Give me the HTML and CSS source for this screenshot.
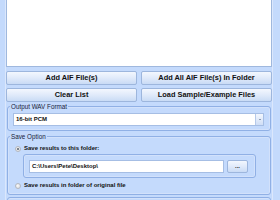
FILE: index.html
```html
<!DOCTYPE html>
<html>
<head>
<meta charset="utf-8">
<link rel="stylesheet" href="styles.css">
</head>
<body>
<div class="win">
  <div class="panel">
    <div class="list"></div>
    <div class="btnrow">
      <button class="btn">Add AIF File(s)</button>
      <button class="btn">Add All AIF File(s) In Folder</button>
      <button class="btn">Clear List</button>
      <button class="btn">Load Sample/Example Files</button>
    </div>
    <div class="group g1">
      <div class="legend">Output WAV Format</div>
      <div class="select">
        <span class="sel-text">16-bit PCM</span>
        <span class="sel-btn"><span class="arrow"></span></span>
      </div>
    </div>
    <div class="group g2">
      <div class="legend">Save Option</div>
      <div class="radio-row first">
        <span class="radio checked"></span>
        <span class="rlabel">Save results to this folder:</span>
      </div>
      <div class="inner">
        <div class="input">C:\Users\Pete\Desktop\</div>
        <button class="dots">...</button>
      </div>
      <div class="radio-row second">
        <span class="radio"></span>
        <span class="rlabel">Save results in folder of original file</span>
      </div>
    </div>
    <div class="group g3"></div>
  </div>
</div>
</body>
</html>
```

FILE: styles.css
```css
html, body {
  margin: 0;
  padding: 0;
}
body {
  background: #c4dafc;
  font-family: "Liberation Sans", Arial, sans-serif;
  color: #111;
}
.win {
  width: 280px;
  height: 200px;
  overflow: hidden;
  background: #c4dafc;
  padding-left: 5px;
  box-sizing: border-box;
  display: flex;
}
.panel {
  width: 268px;
  box-sizing: border-box;
  border-left: 1px solid #dbe7fc;
  border-right: 1px solid #dbe7fc;
  display: flex;
  flex-direction: column;
}
.list {
  margin-top: -2px;
  height: 69px;
  flex: none;
  box-sizing: border-box;
  background: #fff;
  border: 1px solid #9fb8de;
}
.btnrow {
  margin-top: 4px;
  display: grid;
  grid-template-columns: 1fr 1fr;
  grid-auto-rows: 14px;
  column-gap: 4px;
  row-gap: 3px;
}
.btn {
  margin: 0;
  padding: 0;
  box-sizing: border-box;
  height: 14px;
  border: 1px solid #9db6dd;
  border-radius: 2px;
  background: linear-gradient(#f3f7fe, #e0eafa 50%, #c9dbf5);
  font-family: "Liberation Sans", Arial, sans-serif;
  font-weight: bold;
  font-size: 7.4px;
  line-height: 12px;
  color: #111;
  text-align: center;
  white-space: nowrap;
}
.group {
  margin: 0 1px;
  box-sizing: border-box;
  border: 1px solid #90b0e5;
  border-radius: 3px;
  box-shadow: inset 0 0 0 1px #d2e1fb;
  flex: none;
}
.g1 {
  margin-top: 4px;
  padding: 0 6px 4px 5px;
}
.g2 {
  margin-top: 5px;
  padding: 0 6px 5px 5px;
}
.g3 {
  margin-top: 2px;
  height: 20px;
}
.legend {
  margin-top: -4px;
  margin-left: -3px;
  padding: 0 1px;
  height: 7px;
  line-height: 7px;
  font-size: 6.3px;
  color: #16213a;
  background: #c4dafc;
  width: max-content;
}
.select {
  margin-top: 3px;
  height: 13px;
  box-sizing: border-box;
  background: #fff;
  border: 1px solid #a6bee4;
  display: flex;
  align-items: center;
  justify-content: space-between;
  padding: 0 0 0 2px;
}
.sel-text {
  font-size: 6px;
  font-weight: bold;
  line-height: 11px;
}
.sel-btn {
  width: 8px;
  height: 11px;
  box-sizing: border-box;
  border-left: 1px solid #b5c9ea;
  background: linear-gradient(#f3f7fe, #cfdef6);
  display: flex;
  align-items: center;
  justify-content: center;
}
.arrow {
  width: 0;
  height: 0;
  border-left: 1.5px solid transparent;
  border-right: 1.5px solid transparent;
  border-top: 1.5px solid #3a4a66;
}
.radio-row {
  height: 7px;
  display: flex;
  align-items: center;
  gap: 3px;
  padding-left: 2px;
}
.radio-row.first {
  margin-top: 5px;
}
.radio-row.second {
  margin-top: 4px;
}
.radio {
  width: 6px;
  height: 6px;
  box-sizing: border-box;
  border-radius: 50%;
  border: 1px solid #b4b8c0;
  background: radial-gradient(circle at 40% 40%, #fbfbfb, #d6d8dc);
  display: flex;
  align-items: center;
  justify-content: center;
}
.radio.checked::after {
  content: "";
  width: 2px;
  height: 2px;
  border-radius: 50%;
  background: #55606e;
}
.rlabel {
  font-size: 6px;
  font-weight: bold;
  line-height: 7px;
  white-space: nowrap;
}
.inner {
  margin: 2px 8px 0 10px;
  box-sizing: border-box;
  height: 24px;
  border: 1px solid #90b0e5;
  border-radius: 3px;
  box-shadow: inset 0 0 0 1px #d2e1fb;
  padding: 5px 7px 0 5px;
  display: flex;
  gap: 3px;
}
.input {
  flex: 1;
  height: 13px;
  box-sizing: border-box;
  background: #fff;
  border: 1px solid #a6bee4;
  font-size: 6px;
  font-weight: bold;
  line-height: 11px;
  padding-left: 2px;
  white-space: nowrap;
}
.dots {
  margin: 0;
  padding: 0;
  width: 21px;
  height: 13px;
  box-sizing: border-box;
  border: 1px solid #9db6dd;
  border-radius: 2px;
  background: linear-gradient(#f3f7fe, #e0eafa 50%, #c9dbf5);
  font-family: "Liberation Sans", Arial, sans-serif;
  font-weight: bold;
  font-size: 6px;
  line-height: 9px;
  color: #111;
  text-align: center;
}
```
